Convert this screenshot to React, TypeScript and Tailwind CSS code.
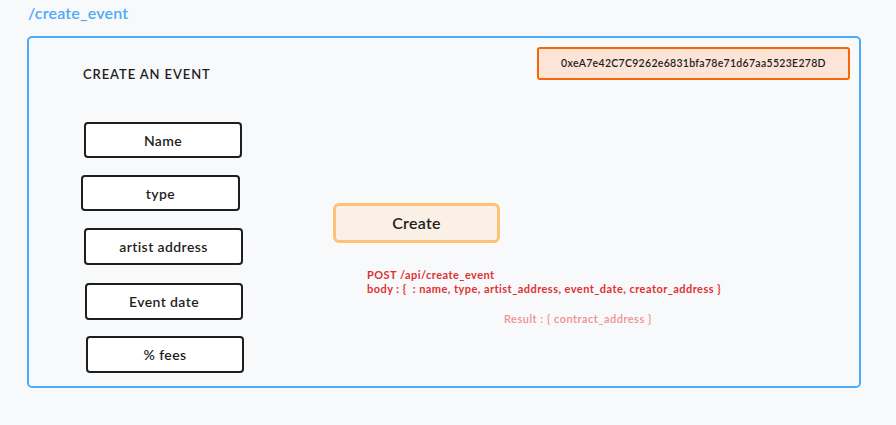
const hand = { fontFamily: '"Lato", "Noto Sans", sans-serif' };

const fields = [
  { label: "Name", cls: "ml-[3px] mt-[39px] w-[158px] h-[36px]" },
  { label: "type", cls: "ml-0 mt-[17px] w-[159px] h-[36px]" },
  { label: "artist address", cls: "ml-[3px] mt-[17px] w-[159px] h-[37px]" },
  { label: "Event date", cls: "ml-[4px] mt-[18px] w-[158px] h-[37px]" },
  { label: "% fees", cls: "ml-[5px] mt-[16px] w-[158px] h-[37px]" },
];

export default function App() {
  return (
    <div className="w-[896px] h-[425px] bg-[#f8f9fb] text-[#1e1e1e] overflow-hidden" style={hand}>
      {/* route label */}
      <div className="pl-[28px] pt-[3px] h-[36px] text-[16px] leading-[20px] font-semibold tracking-[0.2px] text-[#4dabf7]">
        /create_event
      </div>

      {/* frame */}
      <div className="ml-[27px] w-[834px] h-[352px] border-[2.5px] border-[#4dabf7] rounded-[5px] flex pl-[52px]">
        {/* form column */}
        <div className="w-[164px] flex flex-col">
          <div className="ml-[2px] mt-[27px] text-[13px] leading-[18px] font-semibold tracking-[0.9px]">
            CREATE AN EVENT
          </div>
          {fields.map((f) => (
            <div
              key={f.label}
              className={`${f.cls} bg-white border-2 border-[#1e1e1e] rounded-[4px] flex items-center justify-center text-[14px] font-semibold tracking-[0.4px]`}
            >
              {f.label}
            </div>
          ))}
        </div>

        {/* right side */}
        <div className="flex-1 flex flex-col pr-[9px] pt-[9px]">
          <div className="self-end w-[313px] h-[33px] bg-[#fce5d7] border-2 border-[#f76707] rounded-[3px] flex items-center justify-center text-[10.5px] font-semibold tracking-[0.3px]">
            0xeA7e42C7C9262e6831bfa78e71d67aa5523E278D
          </div>

          <div className="ml-[88px] mt-[123px] w-[167px] h-[40px] bg-[#fbf0e5] border-[3px] border-[#ffc078] rounded-[6px] flex items-center justify-center text-[16px] font-semibold tracking-[0.3px]">
            Create
          </div>

          <div className="ml-[122px] mt-[25px] text-[11px] leading-[13.5px] font-bold tracking-[0.45px] text-[#e03131]">
            <div>POST /api/create_event</div>
            <div>body : {"{"}&nbsp; : name, type, artist_address, event_date, creator_address {"}"}</div>
          </div>

          <div className="ml-[259px] mt-[17px] text-[11px] leading-[13px] font-semibold tracking-[0.5px] text-[#f0908c]">
            Result : {"{"} contract_address {"}"}
          </div>
        </div>
      </div>
    </div>
  );
}
